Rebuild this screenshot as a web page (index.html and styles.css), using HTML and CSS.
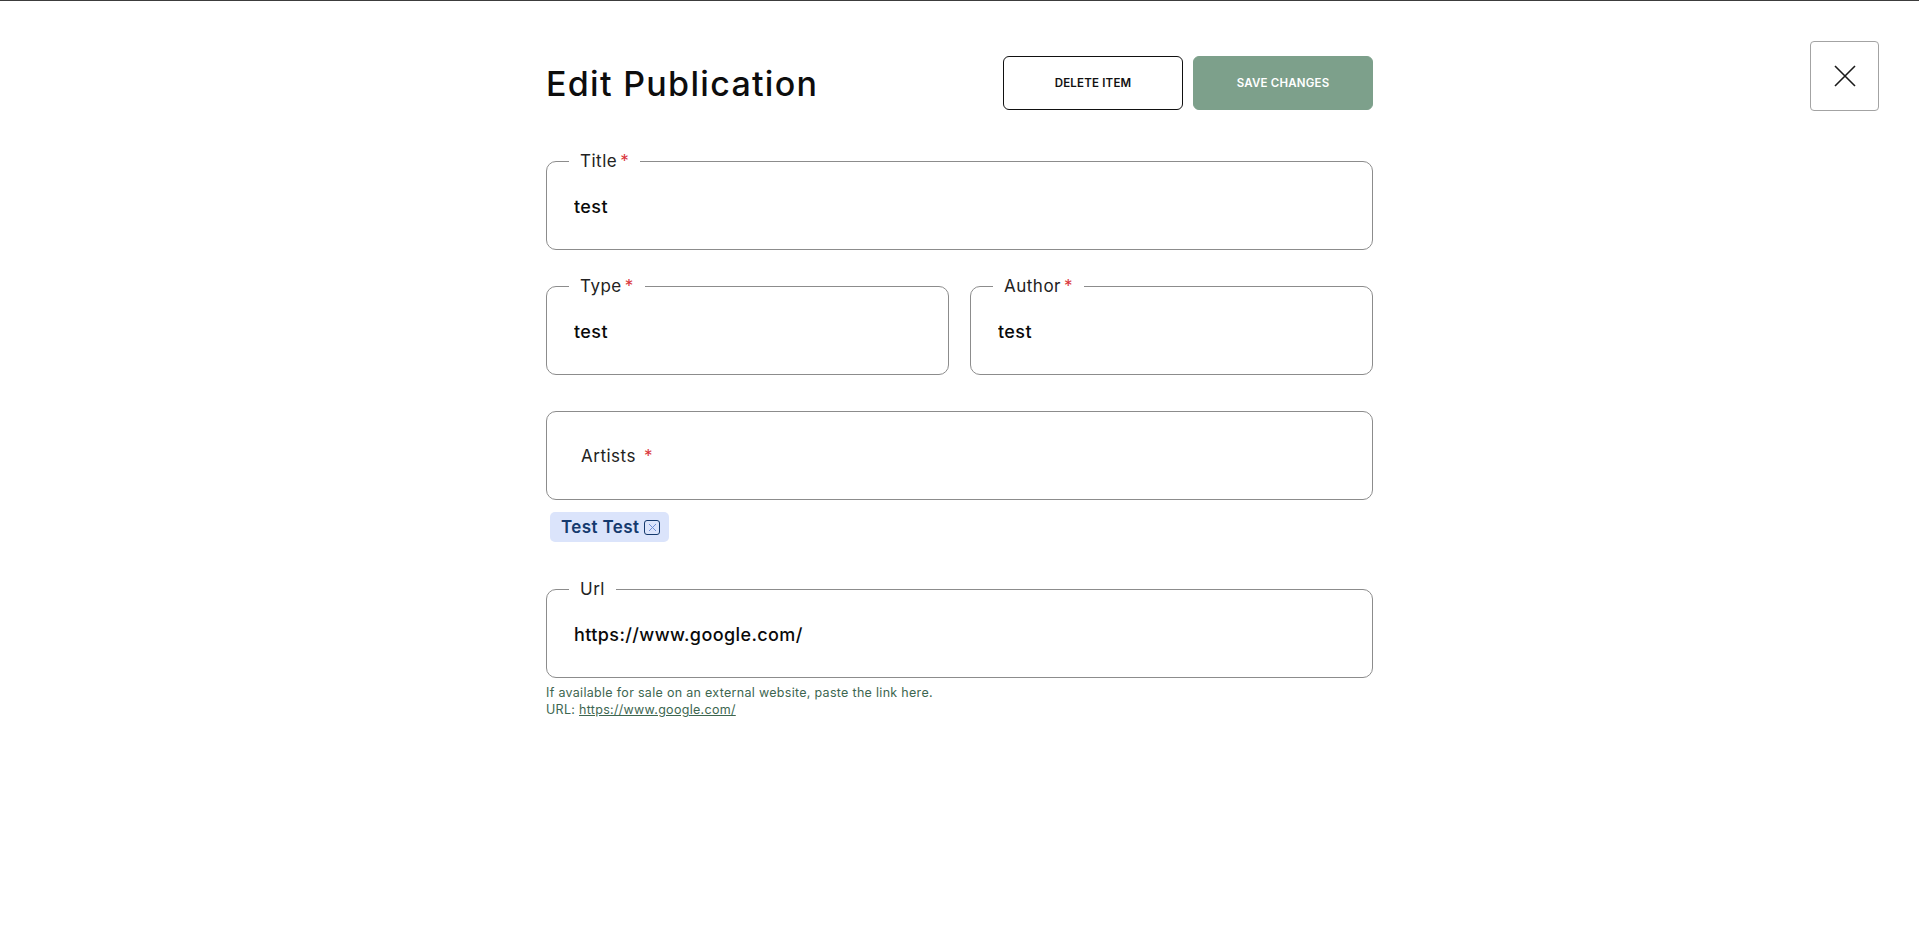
FILE: index.html
```html
<!DOCTYPE html>
<html lang="en">
<head>
<meta charset="utf-8">
<title>Edit Publication</title>
<link rel="stylesheet" href="styles.css">
</head>
<body>
<div class="page">
  <button class="close-btn" aria-label="Close">
    <svg width="22" height="22" viewBox="0 0 22 22"><path d="M1 1L21 21M21 1L1 21" stroke="#1a1a1a" stroke-width="1.6" fill="none"/></svg>
  </button>
  <main class="form">
    <header class="form-head">
      <h1 class="heading">Edit Publication</h1>
      <div class="actions">
        <button class="btn btn-outline">DELETE ITEM</button>
        <button class="btn btn-solid">SAVE CHANGES</button>
      </div>
    </header>

    <fieldset class="field">
      <legend class="field-label">Title<span class="req">*</span></legend>
      <input class="field-input" type="text" value="test">
    </fieldset>

    <div class="row">
      <fieldset class="field">
        <legend class="field-label">Type<span class="req">*</span></legend>
        <input class="field-input" type="text" value="test">
      </fieldset>
      <fieldset class="field">
        <legend class="field-label">Author<span class="req">*</span></legend>
        <input class="field-input" type="text" value="test">
      </fieldset>
    </div>

    <div class="select-box">
      <span class="select-label">Artists</span><span class="req req-spaced">*</span>
    </div>
    <div class="chips">
      <span class="chip">Test Test<span class="chip-x"><svg width="9" height="9" viewBox="0 0 9 9"><path d="M1 1L8 8M8 1L1 8" stroke="#6f8fd6" stroke-width="1" fill="none"/></svg></span></span>
    </div>

    <fieldset class="field field-url">
      <legend class="field-label">Url</legend>
      <input class="field-input" type="text" value="https://www.google.com/">
    </fieldset>
    <p class="helper">If available for sale on an external website, paste the link here.<br>URL: <a class="helper-link" href="#">https://www.google.com/</a></p>
  </main>
</div>
</body>
</html>
```

FILE: styles.css
```css
* { box-sizing: border-box; }
html, body { margin: 0; padding: 0; background: #fff; }
body {
  font-family: "Inter", "DejaVu Sans", sans-serif;
  color: #111;
  border-top: 1px solid #3c3c3c;
  min-height: 946px;
}
.page { position: relative; }
.close-btn {
  position: absolute;
  top: 40px;
  right: 40px;
  width: 69px;
  height: 70px;
  border: 1px solid #a3a3a3;
  border-radius: 4px;
  background: #fff;
  display: flex;
  align-items: center;
  justify-content: center;
  padding: 0;
}
.form {
  width: 827px;
  margin: 0 auto;
  padding-top: 55px;
}
.form-head {
  display: flex;
  justify-content: space-between;
  align-items: center;
  height: 54px;
  margin-bottom: 41px;
}
.heading {
  margin: 0;
  font-size: 34px;
  font-weight: 500;
  letter-spacing: 1.3px;
  color: #0d0d0d;
}
.actions { display: flex; gap: 10px; }
.btn {
  width: 180px;
  height: 54px;
  border-radius: 6px;
  font-family: inherit;
  font-size: 11.5px;
  font-weight: 600;
  letter-spacing: 0.2px;
}
.btn-outline { background: #fff; border: 1px solid #111; color: #111; }
.btn-solid { background: #7da08b; border: 1px solid #7da08b; color: #fff; }

.field {
  margin: 0;
  padding: 0 22px;
  border: 1px solid #8c8c8c;
  border-radius: 10px;
  min-width: 0;
}
.field-label {
  padding: 0 11px;
  font-size: 17px;
  line-height: 20px;
  letter-spacing: 0.5px;
  color: #222;
}
.req { color: #d9343a; margin-left: 3px; }
.req-spaced { margin-left: 8px; }
.field-input {
  display: block;
  width: 100%;
  height: 78px;
  padding: 0 0 7px 5px;
  border: none;
  outline: none;
  background: transparent;
  font-family: inherit;
  font-size: 18px;
  font-weight: 500;
  letter-spacing: 0.4px;
  color: #0a0a0a;
}
.row {
  display: grid;
  grid-template-columns: 1fr 1fr;
  gap: 21px;
  margin-top: 26px;
}
.select-box {
  margin-top: 36px;
  height: 89px;
  border: 1px solid #8c8c8c;
  border-radius: 10px;
  display: flex;
  align-items: center;
  padding-left: 34px;
  font-size: 17px;
  letter-spacing: 0.5px;
  color: #222;
}
.chips { margin-top: 12px; padding-left: 4px; display: flex; }
.chip {
  display: inline-flex;
  align-items: center;
  gap: 5px;
  height: 30px;
  padding: 0 9px 0 11px;
  background: #dbe4fb;
  border-radius: 5px;
  color: #153a6e;
  font-size: 17px;
  font-weight: 600;
  letter-spacing: 0.4px;
}
.chip-x {
  width: 16px;
  height: 15px;
  border: 1px solid #153a6e;
  border-radius: 3px;
  display: inline-flex;
  align-items: center;
  justify-content: center;
}
.field-url { margin-top: 37px; }
.helper {
  margin: 6px 0 0;
  font-size: 12.5px;
  line-height: 17px;
  letter-spacing: 0.3px;
  color: #3d6650;
}
.helper-link { color: #3d6650; text-decoration: underline; }
```
